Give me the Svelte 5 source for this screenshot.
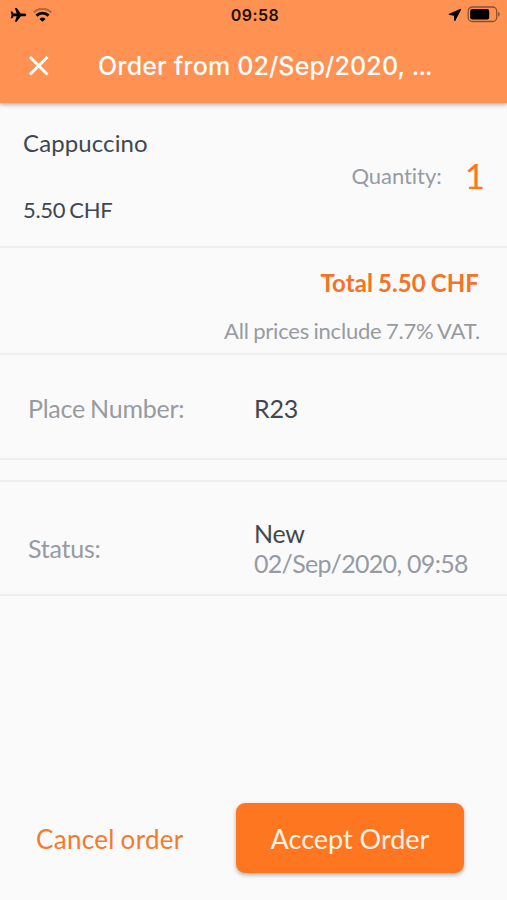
<script lang="ts">
	const order = {
		title: 'Order from 02/Sep/2020, ',
		place: 'R23',
		status: 'New',
		date: '02/Sep/2020, 09:58',
		total: '5.50 CHF',
		items: [
			{ name: 'Cappuccino', price: '5.50 CHF', quantity: 1 }
		]
	}
</script>

<div class="screen">
	<header>
		<div class="status-bar">
			<div class="side">
				<svg width="17" height="16" viewBox="0 0 17 16">
					<path d="M16.200 7.900c0-.9-1-1.400-2.100-1.400h-3.300L6.700 1H4.900l1.800 5.500H3.700L2.300 4.600H.8l.8 3.300-.8 3.300h1.500l1.400-1.900h3l-1.800 5.500h1.800l4.100-5.500h3.300c1.100 0 2.100-.5 2.100-1.400z" />
				</svg>
				<svg width="19" height="14" viewBox="0 0 19 14">
					<path d="M.8 4.500a12.300 12.300 0 0 1 17.400 0" fill="none" stroke="#000" stroke-width="2.400" opacity=".28" />
					<path d="M3.500 7.600a8.500 8.500 0 0 1 12 0" fill="none" stroke="#000" stroke-width="2.900" />
					<path d="M9.500 13.800 6.500 10.900a4.300 4.300 0 0 1 6 0z" />
				</svg>
			</div>
			<time>09:58</time>
			<div class="side right">
				<svg width="14" height="14" viewBox="0 0 14 14">
					<path d="M12.800 1.200.900 6.400l5.500.9.400 5.500z" stroke="#000" stroke-width="1" stroke-linejoin="round" />
				</svg>
				<svg width="33" height="17" viewBox="0 0 33 17">
					<rect x="1.200" y="1" width="28.500" height="14.500" rx="4" fill="none" stroke="#000" stroke-width="1.300" opacity=".45" />
					<rect x="3.200" y="3" width="19" height="10.500" rx="2" />
					<path d="M31.200 6v4.600c.8-.3 1.400-1.200 1.400-2.300S32 6.300 31.200 6z" opacity=".5" />
				</svg>
			</div>
		</div>
		<div class="toolbar">
			<button class="close" aria-label="Close">
				<svg width="20" height="20" viewBox="0 0 20 20">
					<path d="M1 1l17.500 17.500M18.500 1 1 18.500" stroke="#fff" stroke-width="2.900" />
				</svg>
			</button>
			<h1>{order.title}<span>...</span></h1>
		</div>
	</header>

	{#each order.items as item}
		<section class="item">
			<div class="info">
				<div class="name">{item.name}</div>
				<div class="price">{item.price}</div>
			</div>
			<div class="quantity">
				<span class="label">Quantity:</span>
				<span class="count">{item.quantity}</span>
			</div>
		</section>
	{/each}

	<section class="summary">
		<div class="total">Total {order.total}</div>
		<div class="vat">All prices include 7.7% VAT.</div>
	</section>

	<section class="row place">
		<div class="label">Place Number:</div>
		<div class="value">{order.place}</div>
	</section>

	<section class="row status">
		<div class="label">Status:</div>
		<div class="value">
			{order.status}
			<div class="date">{order.date}</div>
		</div>
	</section>

	<footer>
		<button class="cancel">Cancel order</button>
		<button class="accept">Accept Order</button>
	</footer>
</div>

<style>
	:global(body) {
		margin: 0;
		background: #fafafa;
	}
	.screen {
		display: flex;
		flex-direction: column;
		height: 900px;
		overflow: hidden;
		background: #fafafa;
		color: #414750;
		font-family: Lato, 'Liberation Sans', sans-serif;
		font-variant-ligatures: none;
	}
	svg {
		display: block;
	}
	button {
		padding: 0;
		border: 0;
		background: none;
		font: inherit;
	}
	header {
		height: 103px;
		background: #ff9153;
		color: #fff;
		font-family: Inter, 'Liberation Sans', sans-serif;
		box-shadow: 0 1px 5px rgba(0, 0, 0, 0.4);
	}
		.status-bar {
			display: flex;
			align-items: center;
			height: 29px;
			padding: 0 7px 0 10px;
			color: #1c0e06;
		}
		.side {
			flex: 1;
			display: flex;
			align-items: center;
			gap: 6px;
		}
			.side.right {
				justify-content: flex-end;
				gap: 5px;
			}
		time {
			font-size: 16px;
			font-weight: 600;
			letter-spacing: 0.5px;
		}
		.toolbar {
			display: flex;
			align-items: center;
			height: 74px;
			padding-left: 29px;
		}
		h1 {
			margin: 0 0 0 49px;
			font-size: 25px;
			font-weight: 500;
			line-height: 30px;
			letter-spacing: 0.15px;
			white-space: nowrap;
		}
			h1 span {
				letter-spacing: -1px;
			}
	section {
		box-sizing: border-box;
		border-bottom: 2px solid #eeeeef;
	}
	.label {
		color: #979ba1;
	}
	.item {
		display: flex;
		justify-content: space-between;
		height: 145px;
		padding: 25px 23px 0;
	}
		.name {
			font-size: 24px;
			line-height: 30px;
			letter-spacing: 0.1px;
		}
		.price {
			margin-top: 37px;
			font-size: 22px;
			line-height: 30px;
			letter-spacing: -0.35px;
			word-spacing: -1px;
		}
		.quantity {
			display: flex;
			align-items: center;
			gap: 23px;
			height: 94px;
			margin-right: -1px;
			font-size: 22px;
		}
			.quantity .label {
				letter-spacing: -0.05px;
			}
			.count {
				color: #ff7621;
				font-size: 35px;
				line-height: 42px;
			}
	.summary {
		height: 107px;
		padding: 20px 28px 0;
		text-align: right;
	}
		.total {
			color: #f47324;
			font-size: 24px;
			font-weight: 700;
			line-height: 30px;
			letter-spacing: 0.1px;
			word-spacing: -1px;
		}
		.vat {
			margin-top: 18px;
			margin-right: -1px;
			color: #979ba1;
			font-size: 22px;
			line-height: 30px;
			letter-spacing: -0.2px;
			word-spacing: -1px;
		}
	.row {
		display: grid;
		grid-template-columns: 226px 1fr;
		align-items: center;
		padding-left: 28px;
		font-size: 25px;
		line-height: 30px;
		letter-spacing: -0.25px;
		word-spacing: -1px;
	}
	.place {
		height: 105px;
		padding-top: 2px;
	}
	.status {
		height: 116px;
		margin-top: 20px;
		padding-top: 20px;
		border-top: 2px solid #eeeeef;
	}
		.date {
			color: #979ba1;
			letter-spacing: -0.7px;
			word-spacing: 0;
		}
	footer {
		display: flex;
		align-items: center;
		justify-content: space-between;
		margin-top: auto;
		padding: 0 43px 27px 36px;
		font-size: 26px;
	}
		.cancel {
			padding-top: 2px;
			color: #f47a2c;
			letter-spacing: 0.3px;
			word-spacing: -1px;
		}
		.accept {
			width: 228px;
			height: 70px;
			padding-top: 1px;
			border-radius: 9px;
			background: #ff7621;
			color: #fff3e6;
			font-size: 27px;
			box-shadow: 0 2px 4px rgba(0, 0, 0, 0.3);
		}
</style>
